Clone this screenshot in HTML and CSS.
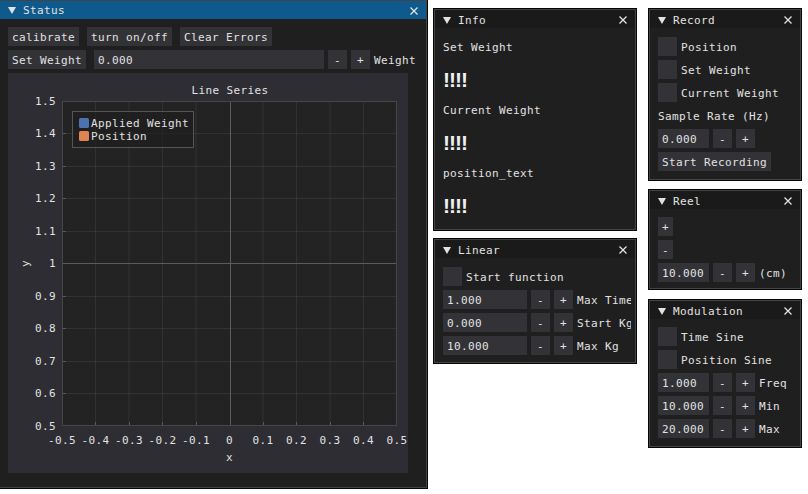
FILE: index.html
```html
<!DOCTYPE html>
<html>
<head>
<meta charset="utf-8">
<link rel="stylesheet" href="styles.css">
</head>
<body>
<div class="desk">

<div class="win status">
  <div class="tb on">
    <svg class="tri" width="8" height="7" viewBox="0 0 8 7"><polygon points="0,0 8,0 4,7"/></svg>
    <span>Status</span>
    <svg class="x" width="8" height="8" viewBox="0 0 8 8"><path d="M0.5 0.5L7.5 7.5M7.5 0.5L0.5 7.5"/></svg>
  </div>
  <div class="wb">
    <div class="row g8">
      <span class="btn">calibrate</span>
      <span class="btn">turn on/off</span>
      <span class="btn">Clear Errors</span>
    </div>
    <div class="row">
      <span class="btn">Set Weight</span>
      <span class="inp w-status">0.000</span>
      <span class="btn sq">-</span>
      <span class="btn sq">+</span>
      <span class="lbl">Weight</span>
    </div>
    <div class="plotframe">
      <svg width="400" height="400" viewBox="0 0 400 400" class="plot">
        <text class="ptitle" x="222" y="17" text-anchor="middle" dominant-baseline="central">Line Series</text>
        <rect x="54" y="28" width="335" height="325" class="parea"/>
        <g class="grid">
          <line x1="87.5" y1="28" x2="87.5" y2="353"/>
          <line x1="121" y1="28" x2="121" y2="353"/>
          <line x1="154.5" y1="28" x2="154.5" y2="353"/>
          <line x1="188" y1="28" x2="188" y2="353"/>
          <line x1="255" y1="28" x2="255" y2="353"/>
          <line x1="288.5" y1="28" x2="288.5" y2="353"/>
          <line x1="322" y1="28" x2="322" y2="353"/>
          <line x1="355.5" y1="28" x2="355.5" y2="353"/>
          <line x1="54" y1="60.5" x2="389" y2="60.5"/>
          <line x1="54" y1="93.5" x2="389" y2="93.5"/>
          <line x1="54" y1="125.5" x2="389" y2="125.5"/>
          <line x1="54" y1="158.5" x2="389" y2="158.5"/>
          <line x1="54" y1="223.5" x2="389" y2="223.5"/>
          <line x1="54" y1="255.5" x2="389" y2="255.5"/>
          <line x1="54" y1="288.5" x2="389" y2="288.5"/>
          <line x1="54" y1="320.5" x2="389" y2="320.5"/>
        </g>
        <g class="zero">
          <line x1="222.5" y1="28" x2="222.5" y2="353"/>
          <line x1="54" y1="190.5" x2="389" y2="190.5"/>
        </g>
        <g class="ticks">
          <line x1="54" y1="60.5" x2="58" y2="60.5"/>
          <line x1="54" y1="93.5" x2="58" y2="93.5"/>
          <line x1="54" y1="125.5" x2="58" y2="125.5"/>
          <line x1="54" y1="158.5" x2="58" y2="158.5"/>
          <line x1="54" y1="223.5" x2="58" y2="223.5"/>
          <line x1="54" y1="255.5" x2="58" y2="255.5"/>
          <line x1="54" y1="288.5" x2="58" y2="288.5"/>
          <line x1="54" y1="320.5" x2="58" y2="320.5"/>
          <line x1="87.5" y1="353" x2="87.5" y2="349"/>
          <line x1="121.5" y1="353" x2="121.5" y2="349"/>
          <line x1="154.5" y1="353" x2="154.5" y2="349"/>
          <line x1="188.5" y1="353" x2="188.5" y2="349"/>
          <line x1="255.5" y1="353" x2="255.5" y2="349"/>
          <line x1="288.5" y1="353" x2="288.5" y2="349"/>
          <line x1="322.5" y1="353" x2="322.5" y2="349"/>
          <line x1="355.5" y1="353" x2="355.5" y2="349"/>
        </g>
        <rect x="54.5" y="28.5" width="334" height="324" class="pborder"/>
        <g class="ylab" text-anchor="end" dominant-baseline="central">
          <text x="48" y="28">1.5</text>
          <text x="48" y="60.5">1.4</text>
          <text x="48" y="93">1.3</text>
          <text x="48" y="125.5">1.2</text>
          <text x="48" y="158">1.1</text>
          <text x="48" y="190.5">1</text>
          <text x="48" y="223">0.9</text>
          <text x="48" y="255.5">0.8</text>
          <text x="48" y="288">0.7</text>
          <text x="48" y="320.5">0.6</text>
          <text x="48" y="353">0.5</text>
        </g>
        <g class="xlab" text-anchor="middle" dominant-baseline="central">
          <text x="54" y="367">-0.5</text>
          <text x="87.5" y="367">-0.4</text>
          <text x="121" y="367">-0.3</text>
          <text x="154.5" y="367">-0.2</text>
          <text x="188" y="367">-0.1</text>
          <text x="221.5" y="367">0</text>
          <text x="255" y="367">0.1</text>
          <text x="288.5" y="367">0.2</text>
          <text x="322" y="367">0.3</text>
          <text x="355.5" y="367">0.4</text>
          <text x="389" y="367">0.5</text>
        </g>
        <text x="221.5" y="384.5" text-anchor="middle" dominant-baseline="central">x</text>
        <text transform="translate(17 190.5) rotate(-90)" text-anchor="middle" dominant-baseline="central">y</text>
        <rect x="64.5" y="38.5" width="121" height="36" class="legend"/>
        <rect x="71" y="45" width="10" height="10" rx="1.5" fill="#4c72b0"/>
        <rect x="71" y="58" width="10" height="10" rx="1.5" fill="#dd8452"/>
        <text x="83" y="50" dominant-baseline="central">Applied Weight</text>
        <text x="83" y="63" dominant-baseline="central">Position</text>
      </svg>
    </div>
  </div>
</div>

<div class="win info">
  <div class="tb">
    <svg class="tri" width="8" height="7" viewBox="0 0 8 7"><polygon points="0,0 8,0 4,7"/></svg>
    <span>Info</span>
    <svg class="x" width="8" height="8" viewBox="0 0 8 8"><path d="M0.5 0.5L7.5 7.5M7.5 0.5L0.5 7.5"/></svg>
  </div>
  <div class="wb infob">
    <div class="itext">Set Weight</div>
    <div class="big">!!!!</div>
    <div class="itext">Current Weight</div>
    <div class="big">!!!!</div>
    <div class="itext">position_text</div>
    <div class="big">!!!!</div>
  </div>
</div>

<div class="win linear">
  <div class="tb">
    <svg class="tri" width="8" height="7" viewBox="0 0 8 7"><polygon points="0,0 8,0 4,7"/></svg>
    <span>Linear</span>
    <svg class="x" width="8" height="8" viewBox="0 0 8 8"><path d="M0.5 0.5L7.5 7.5M7.5 0.5L0.5 7.5"/></svg>
  </div>
  <div class="wb pad9">
    <div class="row"><span class="cb"></span><span class="lbl">Start function</span></div>
    <div class="row"><span class="inp w-lin">1.000</span><span class="btn sq">-</span><span class="btn sq">+</span><span class="lbl">Max Time</span></div>
    <div class="row"><span class="inp w-lin">0.000</span><span class="btn sq">-</span><span class="btn sq">+</span><span class="lbl">Start Kg</span></div>
    <div class="row"><span class="inp w-lin">10.000</span><span class="btn sq">-</span><span class="btn sq">+</span><span class="lbl">Max Kg</span></div>
  </div>
</div>

<div class="win record">
  <div class="tb">
    <svg class="tri" width="8" height="7" viewBox="0 0 8 7"><polygon points="0,0 8,0 4,7"/></svg>
    <span>Record</span>
    <svg class="x" width="8" height="8" viewBox="0 0 8 8"><path d="M0.5 0.5L7.5 7.5M7.5 0.5L0.5 7.5"/></svg>
  </div>
  <div class="wb pad9">
    <div class="row"><span class="cb"></span><span class="lbl">Position</span></div>
    <div class="row"><span class="cb"></span><span class="lbl">Set Weight</span></div>
    <div class="row"><span class="cb"></span><span class="lbl">Current Weight</span></div>
    <div class="row"><span class="lbl">Sample Rate (Hz)</span></div>
    <div class="row"><span class="inp w-small">0.000</span><span class="btn sq">-</span><span class="btn sq">+</span></div>
    <div class="row"><span class="btn">Start Recording</span></div>
  </div>
</div>

<div class="win reel">
  <div class="tb">
    <svg class="tri" width="8" height="7" viewBox="0 0 8 7"><polygon points="0,0 8,0 4,7"/></svg>
    <span>Reel</span>
    <svg class="x" width="8" height="8" viewBox="0 0 8 8"><path d="M0.5 0.5L7.5 7.5M7.5 0.5L0.5 7.5"/></svg>
  </div>
  <div class="wb">
    <div class="row"><span class="btn">+</span></div>
    <div class="row"><span class="btn">-</span></div>
    <div class="row"><span class="inp w-small">10.000</span><span class="btn sq">-</span><span class="btn sq">+</span><span class="lbl">(cm)</span></div>
  </div>
</div>

<div class="win modulation">
  <div class="tb">
    <svg class="tri" width="8" height="7" viewBox="0 0 8 7"><polygon points="0,0 8,0 4,7"/></svg>
    <span>Modulation</span>
    <svg class="x" width="8" height="8" viewBox="0 0 8 8"><path d="M0.5 0.5L7.5 7.5M7.5 0.5L0.5 7.5"/></svg>
  </div>
  <div class="wb">
    <div class="row"><span class="cb"></span><span class="lbl">Time Sine</span></div>
    <div class="row"><span class="cb"></span><span class="lbl">Position Sine</span></div>
    <div class="row"><span class="inp w-small">1.000</span><span class="btn sq">-</span><span class="btn sq">+</span><span class="lbl">Freq</span></div>
    <div class="row"><span class="inp w-small">10.000</span><span class="btn sq">-</span><span class="btn sq">+</span><span class="lbl">Min</span></div>
    <div class="row"><span class="inp w-small">20.000</span><span class="btn sq">-</span><span class="btn sq">+</span><span class="lbl">Max</span></div>
  </div>
</div>

</div>
</body>
</html>
```
FILE: styles.css
```css
html, body {
  margin: 0;
  padding: 0;
  background: #ffffff;
}
.desk {
  position: relative;
  width: 808px;
  height: 494px;
  overflow: hidden;
  font-family: "DejaVu Sans Mono", "Liberation Mono", monospace;
  font-size: 11px;
  letter-spacing: 0.38px;
  color: #e2e2e2;
}
.win {
  position: absolute;
  box-sizing: border-box;
  background: #1f1f1f;
  border: 1px solid #444444;
  box-shadow: 0 0 0 1px #050505;
  display: flex;
  flex-direction: column;
  overflow: hidden;
}
.status { left: -1px; top: 0; width: 428px; height: 488px; }
.info { left: 434px; top: 9px; width: 202px; height: 221px; }
.linear { left: 434px; top: 239px; width: 202px; height: 124px; }
.record { left: 649px; top: 9px; width: 152px; height: 171px; }
.reel { left: 649px; top: 190px; width: 152px; height: 99px; }
.modulation { left: 649px; top: 300px; width: 152px; height: 147px; }

.tb {
  flex: none;
  height: 18px;
  box-sizing: border-box;
  display: flex;
  align-items: center;
  gap: 7px;
  padding: 2px 8px 0 8px;
  background: #1a1a1a;
}
.status .tb { padding-top: 1px; }
.tb.on { background: #0f5a8c; }
.tri polygon { fill: #e2e2e2; }
.x { margin-left: auto; }
.x path { stroke: #e2e2e2; stroke-width: 1.3; fill: none; }

.wb {
  flex: 1;
  display: flex;
  flex-direction: column;
  gap: 4px;
  padding: 8px 0 0 8px;
  margin-right: 4px;
  overflow: hidden;
}
.wb.pad9 { padding-top: 9px; }
.row {
  flex: none;
  display: flex;
  align-items: center;
  gap: 4px;
  height: 19px;
  white-space: nowrap;
}
.row.g8 { gap: 8px; }
.row .btn + .inp { margin-left: 4px; }
.btn, .inp {
  flex: none;
  height: 19px;
  line-height: 21px;
  padding: 0 4px;
  background: #333337;
  box-sizing: border-box;
  overflow: visible;
}
.sq { width: 19px; padding: 0; text-align: center; }
.w-status { width: 230px; }
.w-lin { width: 84px; }
.w-small { width: 51px; }
.cb {
  flex: none;
  width: 19px;
  height: 19px;
  background: #333337;
}
.lbl { height: 19px; line-height: 21px; }

.infob { padding-top: 12px; }
.itext { flex: none; height: 13px; line-height: 15px; }
.big {
  flex: none;
  height: 42px;
  box-sizing: border-box;
  padding-top: 3px;
  line-height: 39px;
  font-family: "Liberation Sans", Arial, sans-serif;
  font-weight: bold;
  font-size: 21px;
  letter-spacing: -1px;
  color: #f0f0f0;
}

.plotframe {
  flex: none;
  width: 400px;
  height: 400px;
  background: #2d2d33;
}
.plot { display: block; }
.plot text {
  fill: #e2e2e2;
  font-family: "DejaVu Sans Mono", "Liberation Mono", monospace;
  font-size: 11px;
  letter-spacing: 0.38px;
}
.parea { fill: #232323; }
.grid line { stroke: rgba(255, 255, 255, 0.07); stroke-width: 1; }
.zero line { stroke: #5c5c5c; stroke-width: 1; }
.ticks line { stroke: #5a5a5a; stroke-width: 1; }
.pborder { fill: none; stroke: #464646; stroke-width: 1; }
.legend { fill: rgba(28, 28, 28, 0.6); stroke: #555555; stroke-width: 1; }
```
